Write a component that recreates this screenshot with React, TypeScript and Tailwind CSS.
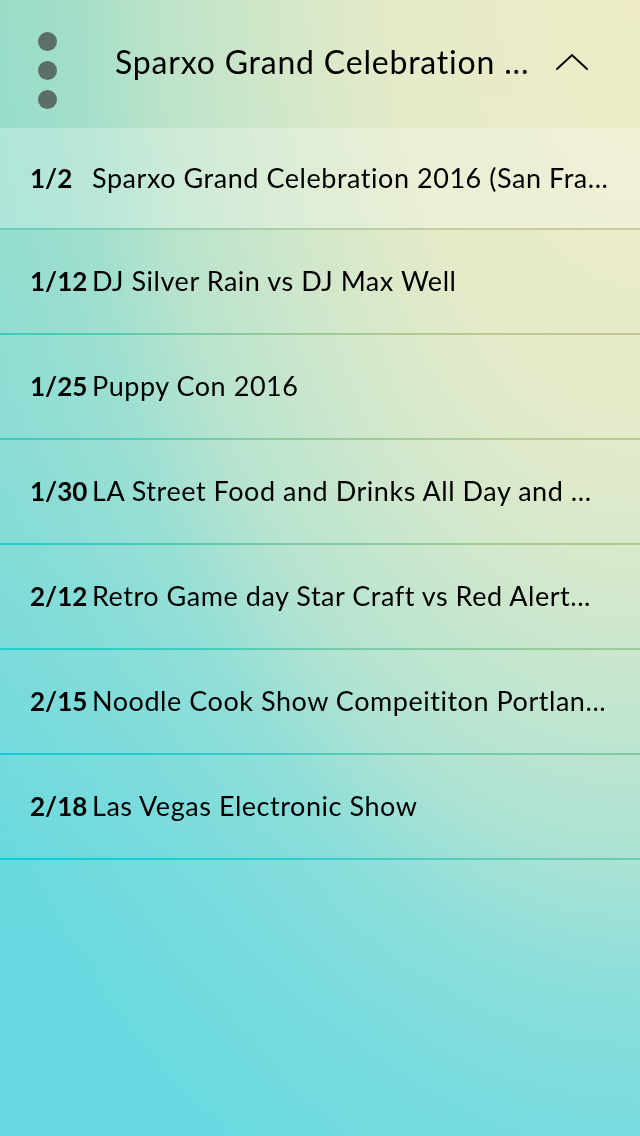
const events = [
  { date: '1/2', title: 'Sparxo Grand Celebration 2016 (San Fra...' },
  { date: '1/12', title: 'DJ Silver Rain vs DJ Max Well' },
  { date: '1/25', title: 'Puppy Con 2016' },
  { date: '1/30', title: 'LA Street Food and Drinks All Day and ...' },
  { date: '2/12', title: 'Retro Game day Star Craft vs Red Alert...' },
  { date: '2/15', title: 'Noodle Cook Show Compeititon Portlan...' },
  { date: '2/18', title: 'Las Vegas Electronic Show' },
]

function Divider() {
  return <div className="h-[2px] w-full backdrop-saturate-[2.2] backdrop-brightness-[0.85]"></div>
}

function Caret() {
  return (
    <svg width="34" height="19" viewBox="0 0 34 19" fill="none" className="ml-auto mr-[51px] mt-[53px]">
      <polyline points="2,16 17,2 32,16" stroke="#000" strokeWidth="2" strokeLinecap="round" strokeLinejoin="miter" />
    </svg>
  )
}

function App() {
  return (
    <div className="relative h-[1136px] w-[640px] overflow-hidden font-['Lato',sans-serif] text-black bg-[linear-gradient(to_bottom,#8cdac8_0%,#82dbd6_38%,#6ad9e0_76%,#66d9e2_100%)]">
      <div className="absolute inset-0 bg-[radial-gradient(ellipse_at_top_right,rgba(238,236,200,1)_0%,rgba(238,236,200,0.92)_25%,rgba(238,236,200,0.8)_35%,rgba(238,236,200,0.5)_53%,rgba(238,236,200,0.25)_62%,rgba(238,236,200,0.12)_72%,rgba(238,236,200,0)_88%)]"></div>
      <div className="relative flex flex-col">
        <header className="flex h-[128px] items-start">
          <div className="ml-[38px] mt-[32px] flex flex-col gap-[10px]">
            <span className="block h-[19px] w-[19px] rounded-full bg-[#5b6f66]"></span>
            <span className="block h-[19px] w-[19px] rounded-full bg-[#5b6f66]"></span>
            <span className="block h-[19px] w-[19px] rounded-full bg-[#5b6f66]"></span>
          </div>
          <h1 className="ml-[58px] mt-[42px] text-[32px] leading-[40px] font-normal tracking-[0.025em] whitespace-nowrap">
            Sparxo Grand Celebration ...
          </h1>
          <Caret />
        </header>
        <ul className="flex flex-col">
          {events.map((e, i) => (
            <li key={e.date} className={i === 0 ? 'bg-white/25' : ''}>
              <div className={`flex items-center pl-[30px] ${i === 0 ? 'h-[100px]' : 'h-[103px]'}`}>
                <span className="w-[62px] shrink-0 text-[26px] font-bold">{e.date}</span>
                <span className="text-[27px] tracking-[0.02em] whitespace-nowrap">{e.title}</span>
              </div>
              <Divider />
            </li>
          ))}
        </ul>
      </div>
    </div>
  )
}

export default App
